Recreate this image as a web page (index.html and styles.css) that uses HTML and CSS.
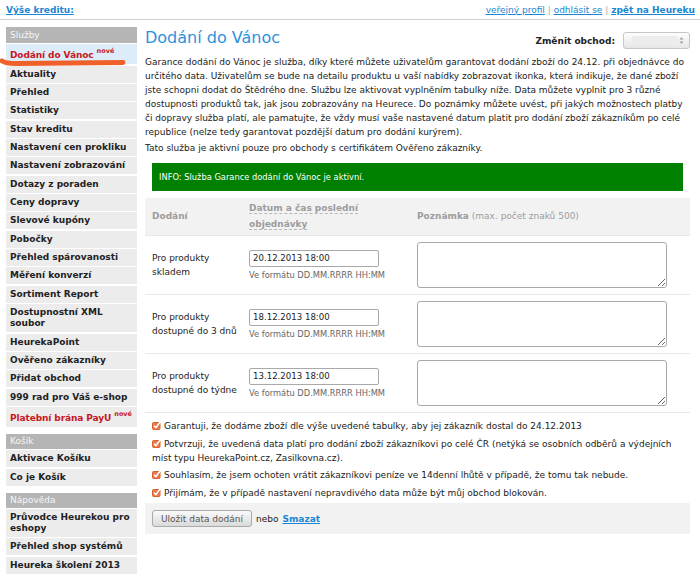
FILE: index.html
```html
<!DOCTYPE html>
<html lang="cs">
<head>
  <meta charset="UTF-8">
  <meta name="viewport" content="width=device-width, initial-scale=1.0">
  <title>Dodání do Vánoc</title>
  <link rel="stylesheet" href="styles.css">
</head>
<body>
  <!-- horni lista -->
  <div class="topbar">
    <a href="#" class="credit">Výše kreditu:</a>
    <div class="toplinks">
      <a href="#">veřejný profil</a> <span class="sep">|</span>
      <a href="#">odhlásit se</a> <span class="sep">|</span>
      <a href="#" class="back">zpět na Heureku</a>
    </div>
  </div>

  <div class="page">
    <!-- menu -->
    <div class="sidebar">
      <div class="menu-head">Služby</div>
      <a class="menu-item active new" href="#">Dodání do Vánoc <sup>nové</sup></a>
      <a class="menu-item" href="#">Aktuality</a>
      <a class="menu-item" href="#">Přehled</a>
      <a class="menu-item" href="#">Statistiky</a>
      <a class="menu-item" href="#">Stav kreditu</a>
      <a class="menu-item" href="#">Nastavení cen prokliku</a>
      <a class="menu-item" href="#">Nastavení zobrazování</a>
      <a class="menu-item" href="#">Dotazy z poraden</a>
      <a class="menu-item" href="#">Ceny dopravy</a>
      <a class="menu-item" href="#">Slevové kupóny</a>
      <a class="menu-item" href="#">Pobočky</a>
      <a class="menu-item" href="#">Přehled spárovanosti</a>
      <a class="menu-item" href="#">Měření konverzí</a>
      <a class="menu-item" href="#">Sortiment Report</a>
      <a class="menu-item" href="#">Dostupnostní XML soubor</a>
      <a class="menu-item" href="#">HeurekaPoint</a>
      <a class="menu-item" href="#">Ověřeno zákazníky</a>
      <a class="menu-item" href="#">Přidat obchod</a>
      <a class="menu-item" href="#">999 rad pro Váš e-shop</a>
      <a class="menu-item red new" href="#">Platební brána PayU <sup>nové</sup></a>

      <div class="menu-head section">Košík</div>
      <a class="menu-item" href="#">Aktivace Košíku</a>
      <a class="menu-item" href="#">Co je Košík</a>

      <div class="menu-head section">Nápověda</div>
      <a class="menu-item" href="#">Průvodce Heurekou pro eshopy</a>
      <a class="menu-item" href="#">Přehled shop systémů</a>
      <a class="menu-item" href="#">Heureka školení 2013</a>
    </div>

    <div class="content">
      <div class="title-row">
        <h1>Dodání do Vánoc</h1>
        <div class="shop-switch">
          <span>Změnit obchod:</span>
          <div class="fake-select">
            <span class="blur"></span>
            <svg class="arrows" width="5" height="9" viewBox="0 0 5 9">
              <path d="M0.5 3.5 L2.5 1.2 L4.5 3.5 Z M0.5 5.5 L2.5 7.8 L4.5 5.5 Z" fill="#9a9a9a"/>
            </svg>
          </div>
        </div>
      </div>

      <p class="intro">Garance dodání do Vánoc je služba, díky které můžete uživatelům garantovat dodání zboží do 24.12. při objednávce do určitého data. Uživatelům se bude na detailu produktu u vaší nabídky zobrazovat ikonka, která indikuje, že dané zboží jste schopni dodat do Štědrého dne. Službu lze aktivovat vyplněním tabulky níže. Data můžete vyplnit pro 3 různé dostupnosti produktů tak, jak jsou zobrazovány na Heurece. Do poznámky můžete uvést, při jakých možnostech platby či dopravy služba platí, ale pamatujte, že vždy musí vaše nastavené datum platit pro dodání zboží zákazníkům po celé republice (nelze tedy garantovat pozdější datum pro dodání kurýrem).</p>
      <p>Tato služba je aktivní pouze pro obchody s certifikátem Ověřeno zákazníky.</p>

      <div class="info">INFO: Služba Garance dodání do Vánoc je aktivní.</div>

      <table class="dates">
        <colgroup>
          <col class="c-label">
          <col class="c-date">
          <col class="c-note">
        </colgroup>
        <tr>
          <th>Dodání</th>
          <th class="date-col"><span class="dashed">Datum a čas poslední objednávky</span></th>
          <th><b>Poznámka</b> (max. počet znaků 500)</th>
        </tr>
        <tr>
          <td>Pro produkty skladem</td>
          <td class="date-col">
            <input type="text" value="20.12.2013 18:00">
            <div class="hint">Ve formátu DD.MM.RRRR HH:MM</div>
          </td>
          <td><textarea></textarea></td>
        </tr>
        <tr>
          <td>Pro produkty dostupné do 3 dnů</td>
          <td class="date-col">
            <input type="text" value="18.12.2013 18:00">
            <div class="hint">Ve formátu DD.MM.RRRR HH:MM</div>
          </td>
          <td><textarea></textarea></td>
        </tr>
        <tr>
          <td>Pro produkty dostupné do týdne</td>
          <td class="date-col">
            <input type="text" value="13.12.2013 18:00">
            <div class="hint">Ve formátu DD.MM.RRRR HH:MM</div>
          </td>
          <td><textarea></textarea></td>
        </tr>
      </table>

      <div class="checks">
        <div class="check"><svg class="cb" width="9" height="9" viewBox="0 0 9 9"><rect x="0.5" y="1.5" width="7.5" height="7" rx="1" fill="#ec7a4e" stroke="#d9602f"/><path d="M2 4.8 L3.9 6.6 L8.3 0.8" fill="none" stroke="#fff" stroke-width="1.5"/></svg>Garantuji, že dodáme zboží dle výše uvedené tabulky, aby jej zákazník dostal do 24.12.2013</div>
        <div class="check"><svg class="cb" width="9" height="9" viewBox="0 0 9 9"><rect x="0.5" y="1.5" width="7.5" height="7" rx="1" fill="#ec7a4e" stroke="#d9602f"/><path d="M2 4.8 L3.9 6.6 L8.3 0.8" fill="none" stroke="#fff" stroke-width="1.5"/></svg>Potvrzuji, že uvedená data platí pro dodání zboží zákazníkovi po celé ČR (netýká se osobních odběrů a výdejních míst typu HeurekaPoint.cz, Zasilkovna.cz).</div>
        <div class="check"><svg class="cb" width="9" height="9" viewBox="0 0 9 9"><rect x="0.5" y="1.5" width="7.5" height="7" rx="1" fill="#ec7a4e" stroke="#d9602f"/><path d="M2 4.8 L3.9 6.6 L8.3 0.8" fill="none" stroke="#fff" stroke-width="1.5"/></svg>Souhlasím, že jsem ochoten vrátit zákazníkovi peníze ve 14denní lhůtě v případě, že tomu tak nebude.</div>
        <div class="check"><svg class="cb" width="9" height="9" viewBox="0 0 9 9"><rect x="0.5" y="1.5" width="7.5" height="7" rx="1" fill="#ec7a4e" stroke="#d9602f"/><path d="M2 4.8 L3.9 6.6 L8.3 0.8" fill="none" stroke="#fff" stroke-width="1.5"/></svg>Přijímám, že v případě nastavení nepravdivého data může být můj obchod blokován.</div>
      </div>

      <div class="actions">
        <button type="button">Uložit data dodání</button>
        <span class="or">nebo</span>
        <a href="#" class="delete">Smazat</a>
      </div>
    </div>
  </div>

  <!-- oranzova cara pres menu (poznamka ve screenshotu) -->
  <svg class="scribble" width="140" height="80" viewBox="0 0 140 80">
    <path d="M2 61 Q6 63.5 16 63.5 L123 62.6" fill="none" stroke="#f0612a" stroke-width="5" stroke-linecap="round"/>
  </svg>
</body>
</html>
```

FILE: styles.css
```css
body {
  margin: 0;
  font-family: "DejaVu Sans", Verdana, sans-serif;
  font-size: 9px;
  color: #222;
  background: #fff;
}
a {
  color: #1a86d4;
}

/* horni lista */
.topbar {
  display: flex;
  justify-content: space-between;
  align-items: center;
  height: 19px;
  padding: 0 5px 0 6px;
  border-bottom: 1px solid #d2d2d2;
}
.credit,
.back {
  font-weight: bold;
}
.toplinks .sep {
  color: #aaa;
}

.page {
  display: flex;
  align-items: flex-start;
  padding: 7px 10px 0 6px;
}

/* menu */
.sidebar {
  width: 131px;
  flex: none;
}
.menu-head {
  background: #b5b5b5;
  color: #f5f5f5;
  line-height: 16px;
  padding: 0 4px;
}
.menu-head.section {
  margin-top: 7px;
  line-height: 15px;
}
.menu-item {
  display: block;
  margin-top: 1.35px;
  padding: 3px 4px;
  line-height: 11px;
  background: #ececec;
  color: #222;
  font-weight: bold;
  text-decoration: none;
}
.menu-item.new {
  padding-top: 6px;
  white-space: nowrap;
  letter-spacing: -0.1px;
}
.menu-item sup {
  font-size: 6.5px;
  line-height: 0;
  vertical-align: 5px;
  letter-spacing: 0;
  color: #c8161e;
}
.menu-item.active {
  background: #dcedf9;
  color: #c8161e;
}
.menu-item.red {
  color: #c8161e;
}

/* obsah */
.content {
  width: 545px;
  margin-left: 8px;
}
.title-row {
  display: flex;
  justify-content: space-between;
  align-items: center;
  height: 22px;
}
h1 {
  margin: 0;
  font-size: 16px;
  font-weight: normal;
  line-height: 22px;
  color: #2b93dc;
}
.shop-switch {
  display: flex;
  align-items: center;
  gap: 8px;
  margin-top: 5px;
  font-weight: bold;
}
.fake-select {
  position: relative;
  width: 65px;
  height: 15px;
  border: 1px solid #c6c6c6;
  border-radius: 3px;
  background: linear-gradient(#fdfdfd, #e6e6e6);
}
.fake-select .blur {
  position: absolute;
  left: 8px;
  top: 3px;
  width: 46px;
  height: 9px;
  background: #ececec;
  border-radius: 3px;
}
.fake-select .arrows {
  position: absolute;
  right: 5px;
  top: 3px;
}

p {
  margin: 0 0 2px;
  line-height: 14px;
}
p.intro {
  margin-top: 6px;
}

.info {
  margin: 8px 7px 7px;
  padding: 0 7px;
  line-height: 28px;
  background: #008000;
  color: #fff;
  font-size: 8.3px;
}

/* tabulka */
.dates {
  width: 545px;
  border-collapse: collapse;
  table-layout: fixed;
}
.c-label {
  width: 101px;
}
.c-date {
  width: 164px;
}
.c-note {
  width: 280px;
}
.dates th {
  background: #f2f2f2;
  color: #9c9c9c;
  font-weight: normal;
  text-align: left;
  padding: 3px 7px;
  line-height: 15.5px;
}
.dates th:first-child,
.dates th b,
.dates th.date-col {
  font-weight: bold;
}
.dashed {
  border-bottom: 1px dashed #b8b8b8;
}
.dates td {
  border-top: 1px solid #e8e8e8;
  padding: 6px 4px 6px 7px;
  line-height: 14px;
  vertical-align: middle;
}
.dates tr:last-child td {
  border-bottom: 1px solid #e8e8e8;
}
.dates .date-col {
  padding-left: 3px;
}
.dates input {
  display: block;
  box-sizing: border-box;
  width: 130px;
  height: 17px;
  margin: 0;
  padding: 0 3px;
  border: 1px solid #a9a9a9;
  border-radius: 2px;
  font-family: inherit;
  font-size: 8.6px;
  color: #222;
}
.hint {
  margin-top: 2px;
  font-size: 8.3px;
  line-height: 12px;
  color: #666;
}
.dates textarea {
  display: block;
  box-sizing: border-box;
  width: 250px;
  height: 46px;
  margin: 0;
  border: 1px solid #a9a9a9;
  border-radius: 3px;
}

.checks {
  padding: 6px 7px 0;
}
.check {
  line-height: 14px;
  margin-bottom: 3.5px;
}
.cb {
  vertical-align: -1px;
  margin-right: 3px;
}

.actions {
  background: #f2f2f2;
  padding: 7px;
  display: flex;
  align-items: center;
}
.actions button {
  height: 17px;
  padding: 0 8px;
  border: 1px solid #a9a9a9;
  border-radius: 3px;
  background: linear-gradient(#fafafa, #dadada);
  font-family: inherit;
  font-size: 9px;
  color: #555;
}
.or {
  margin: 0 4px 0 4px;
}
.delete {
  font-weight: bold;
}

.scribble {
  position: absolute;
  left: 0;
  top: 0;
  pointer-events: none;
}
```
